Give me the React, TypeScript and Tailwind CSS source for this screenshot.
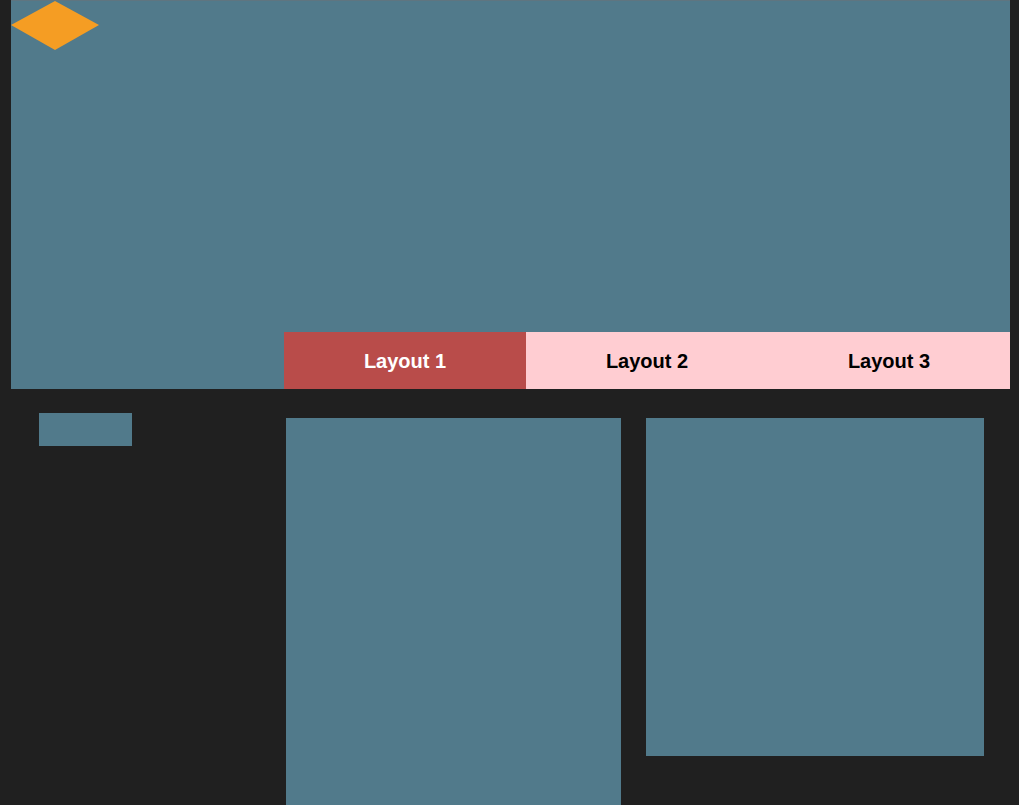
const tabs = [
  { label: 'Layout 1', active: true },
  { label: 'Layout 2', active: false },
  { label: 'Layout 3', active: false },
]

export default function App() {
  return (
    <div className="h-[805px] w-[1019px] overflow-hidden bg-[#202020] font-['Liberation_Sans',Arial,sans-serif]">
      {/* Header */}
      <div className="ml-[11px] flex h-[389px] w-[999px] flex-col justify-between border-t border-[#5f7580] bg-[#517a8b]">
        <svg width="88" height="49" viewBox="0 0 88 49" className="block">
          <polygon points="44,0 88,24 44,49 0,24" fill="#f59d23" />
        </svg>
        <div className="ml-auto flex h-[57px] w-[726px]">
          {tabs.map((tab) => (
            <button
              key={tab.label}
              className={`flex flex-1 items-center justify-center text-[20px] font-bold ${
                tab.active ? 'bg-[#b94c4a] text-white' : 'bg-[#ffcdd2] text-black'
              }`}
            >
              {tab.label}
            </button>
          ))}
        </div>
      </div>

      {/* Content */}
      <div className="flex">
        <div className="w-[286px] shrink-0 pl-[39px] pt-[24px]">
          <div className="h-[33px] w-[93px] bg-[#517a8b]" />
        </div>
        <div className="mt-[29px] flex gap-[25px]">
          <div className="h-[420px] w-[335px] bg-[#517a8b]" />
          <div className="h-[338px] w-[338px] bg-[#517a8b]" />
        </div>
      </div>
    </div>
  )
}
